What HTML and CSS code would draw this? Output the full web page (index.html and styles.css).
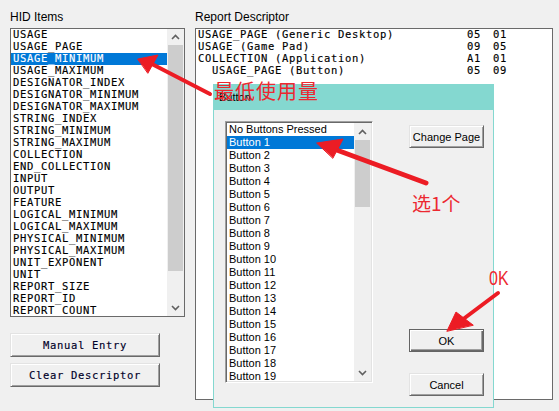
FILE: index.html
```html
<!DOCTYPE html>
<html lang="en">
<head>
<meta charset="utf-8">
<title>HID Descriptor Tool</title>
<link rel="stylesheet" href="styles.css">
</head>
<body>
<div class="app">
  <section class="col col-left">
    <div class="label">HID Items</div>
    <div class="listbox hid">
      <ul class="items mono">
        <li>USAGE</li>
        <li>USAGE_PAGE</li>
        <li class="sel">USAGE_MINIMUM</li>
        <li>USAGE_MAXIMUM</li>
        <li>DESIGNATOR_INDEX</li>
        <li>DESIGNATOR_MINIMUM</li>
        <li>DESIGNATOR_MAXIMUM</li>
        <li>STRING_INDEX</li>
        <li>STRING_MINIMUM</li>
        <li>STRING_MAXIMUM</li>
        <li>COLLECTION</li>
        <li>END_COLLECTION</li>
        <li>INPUT</li>
        <li>OUTPUT</li>
        <li>FEATURE</li>
        <li>LOGICAL_MINIMUM</li>
        <li>LOGICAL_MAXIMUM</li>
        <li>PHYSICAL_MINIMUM</li>
        <li>PHYSICAL_MAXIMUM</li>
        <li>UNIT_EXPONENT</li>
        <li>UNIT</li>
        <li>REPORT_SIZE</li>
        <li>REPORT_ID</li>
        <li>REPORT_COUNT</li>
      </ul>
      <div class="vscroll hid-scroll">
        <div class="sb-btn sb-up"><svg width="9" height="6" viewBox="0 0 9 6"><polyline points="1,5 4.5,1.5 8,5" fill="none" stroke="#606060" stroke-width="1.6"/></svg></div>
        <div class="sb-track"><div class="sb-thumb"></div></div>
        <div class="sb-btn sb-down"><svg width="9" height="6" viewBox="0 0 9 6"><polyline points="1,1 4.5,4.5 8,1" fill="none" stroke="#606060" stroke-width="1.6"/></svg></div>
      </div>
    </div>
    <div class="left-buttons">
      <button class="btn wide mono">Manual Entry</button>
      <button class="btn wide mono">Clear Descriptor</button>
    </div>
  </section>
  <section class="col col-right">
    <div class="label">Report Descriptor</div>
    <div class="report mono">
      <div class="rrow"><span class="rname">USAGE_PAGE (Generic Desktop)</span><span class="hex">05</span><span class="hex">01</span></div>
      <div class="rrow"><span class="rname">USAGE (Game Pad)</span><span class="hex">09</span><span class="hex">05</span></div>
      <div class="rrow"><span class="rname">COLLECTION (Application)</span><span class="hex">A1</span><span class="hex">01</span></div>
      <div class="rrow"><span class="rname">  USAGE_PAGE (Button)</span><span class="hex">05</span><span class="hex">09</span></div>
    </div>
  </section>
</div>

<div class="dialog">
  <div class="titlebar">Button</div>
  <div class="dlg-body">
    <div class="listbox sunken">
      <ul class="items sans">
        <li>No Buttons Pressed</li>
        <li class="sel">Button 1</li>
        <li>Button 2</li>
        <li>Button 3</li>
        <li>Button 4</li>
        <li>Button 5</li>
        <li>Button 6</li>
        <li>Button 7</li>
        <li>Button 8</li>
        <li>Button 9</li>
        <li>Button 10</li>
        <li>Button 11</li>
        <li>Button 12</li>
        <li>Button 13</li>
        <li>Button 14</li>
        <li>Button 15</li>
        <li>Button 16</li>
        <li>Button 17</li>
        <li>Button 18</li>
        <li>Button 19</li>
      </ul>
      <div class="vscroll dlg-scroll">
        <div class="sb-btn sb-up"><svg width="9" height="6" viewBox="0 0 9 6"><polyline points="1,5 4.5,1.5 8,5" fill="none" stroke="#606060" stroke-width="1.6"/></svg></div>
        <div class="sb-track"><div class="sb-thumb"></div></div>
        <div class="sb-btn sb-down"><svg width="9" height="6" viewBox="0 0 9 6"><polyline points="1,1 4.5,4.5 8,1" fill="none" stroke="#606060" stroke-width="1.6"/></svg></div>
      </div>
    </div>
    <div class="dlg-buttons">
      <button class="btn small sans">Change Page</button>
      <button class="btn small sans default ok">OK</button>
      <button class="btn small sans cancel">Cancel</button>
    </div>
  </div>
</div>

<svg class="annot" width="559" height="411" viewBox="0 0 559 411">
  <g fill="#ec1c24" stroke="#ec1c24" stroke-linecap="round">
    <line x1="210" y1="94" x2="150" y2="63" stroke-width="4"/>
    <polygon points="138,59 158,55 148,73" stroke-width="1"/>
    <line x1="426" y1="183" x2="334" y2="149" stroke-width="5"/>
    <polygon points="317,143 343,139 333,158" stroke-width="1"/>
    <line x1="498" y1="293" x2="462" y2="320" stroke-width="4"/>
    <polygon points="447,331 456,312 473,325" stroke-width="1"/>
  </g>
</svg>
<div class="note note-min">最低使用量</div>
<div class="note note-pick">选1个</div>
<div class="note note-ok">0K</div>
</body>
</html>
```

FILE: styles.css
```css
* { box-sizing: border-box; }
html, body { margin: 0; padding: 0; }
body {
  width: 559px;
  height: 411px;
  background: #f0f0f0;
  font-family: "Liberation Sans", Arial, sans-serif;
  color: #000;
  position: relative;
  overflow: hidden;
}
.mono {
  font-family: "DejaVu Sans Mono", "Liberation Mono", monospace;
  font-size: 10.5px;
  letter-spacing: 0.68px;
  -webkit-text-stroke: 0.15px currentColor;
}
.sans {
  font-family: "Liberation Sans", Arial, sans-serif;
  font-size: 11px;
}
.app {
  display: flex;
  gap: 10px;
  padding: 10px 0 0 10px;
}
.col { display: flex; flex-direction: column; }
.col-left { width: 175px; }
.col-right { width: 358px; }
.label {
  height: 18px;
  font-size: 12px;
  line-height: 14px;
}

/* list boxes */
.listbox {
  display: flex;
  background: #fff;
  overflow: hidden;
}
.listbox.hid {
  height: 289px;
  border: 1px solid #6a6a6a;
}
.items {
  list-style: none;
  margin: 0;
  padding: 0;
  flex: 1;
  overflow: hidden;
  white-space: nowrap;
}
.hid .items li {
  height: 12px;
  line-height: 11px;
  padding-left: 2px;
}
.items li.sel {
  background: #0078d7;
  color: #fff;
}
.vscroll {
  width: 17px;
  display: flex;
  flex-direction: column;
  background: #f0f0f0;
}
.sb-btn {
  height: 17px;
  display: flex;
  align-items: center;
  justify-content: center;
}
.hid-scroll .sb-up { height: 16px; }
.sb-track { flex: 1; padding: 0 1px; }
.sb-thumb { background: #cdcdcd; }
.hid-scroll .sb-thumb { height: 226px; }
.dlg-scroll .sb-thumb { height: 67px; }

/* buttons */
.btn {
  display: block;
  background: #f0f0f0;
  border: 1px solid;
  border-color: #e3e3e3 #696969 #696969 #e3e3e3;
  box-shadow: inset 1px 1px #fff, inset -1px -1px #a0a0a0;
  padding: 0;
  margin: 0;
  color: #000;
  white-space: nowrap;
}
.btn.wide { width: 150px; height: 24px; }
.btn.mono { color: #000028; }
.left-buttons {
  display: flex;
  flex-direction: column;
  gap: 6px;
  margin-top: 16px;
}
.btn.small { width: 75px; height: 23px; font-size: 11px; }
.btn.default {
  border: 1px solid #646464;
  box-shadow: inset 1px 1px #fff, inset -1px -1px #696969, inset -2px -2px #a0a0a0;
}

/* report */
.report {
  height: 372px;
  background: #fff;
  border: 1px solid #6a6a6a;
  padding: 0 0 0 2px;
}
.rrow {
  display: flex;
  height: 12px;
  line-height: 11px;
  white-space: pre;
}
.rname { width: 269px; }
.hex { width: 26px; }

/* dialog */
.dialog {
  position: absolute;
  left: 213px;
  top: 84px;
  width: 281px;
  height: 324px;
  background: #f0f0f0;
  border: 1px solid #84d8d0;
  display: flex;
  flex-direction: column;
}
.titlebar {
  height: 25px;
  background: #84d8d0;
  font-size: 11px;
  line-height: 15px;
  padding: 5px 0 0 5px;
  color: #000;
}
.dlg-body {
  display: flex;
  padding: 11px 0 0 11px;
}
.listbox.sunken {
  width: 148px;
  height: 262px;
  border: 1px solid;
  border-color: #a0a0a0 #fff #fff #a0a0a0;
  box-shadow: inset 1px 1px #696969, inset -1px -1px #e3e3e3;
  padding: 1px 1px 1px 1px;
}
.sunken .items li {
  height: 13px;
  line-height: 13px;
  padding-left: 2px;
}
.dlg-buttons {
  display: flex;
  flex-direction: column;
  height: 271px;
  margin: 4px 0 0 36px;
}
.dlg-buttons .ok { margin-top: auto; }
.dlg-buttons .cancel { margin-top: 21px; }

/* annotations */
.annot {
  position: absolute;
  left: 0;
  top: 0;
  pointer-events: none;
}
.note {
  position: absolute;
  color: #ec2830;
  font-family: "Noto Sans CJK SC", "Liberation Sans", sans-serif;
  white-space: nowrap;
  line-height: 1;
}
.note-min { left: 214px; top: 81px; font-size: 20px; letter-spacing: 1px; }
.note-pick { left: 412px; top: 193px; font-size: 19px; }
.note-ok {
  left: 489px;
  top: 268px;
  font-size: 20px;
  font-family: "Liberation Sans Narrow", "Liberation Sans", sans-serif;
  transform: scaleX(0.8);
  transform-origin: left top;
}
```
